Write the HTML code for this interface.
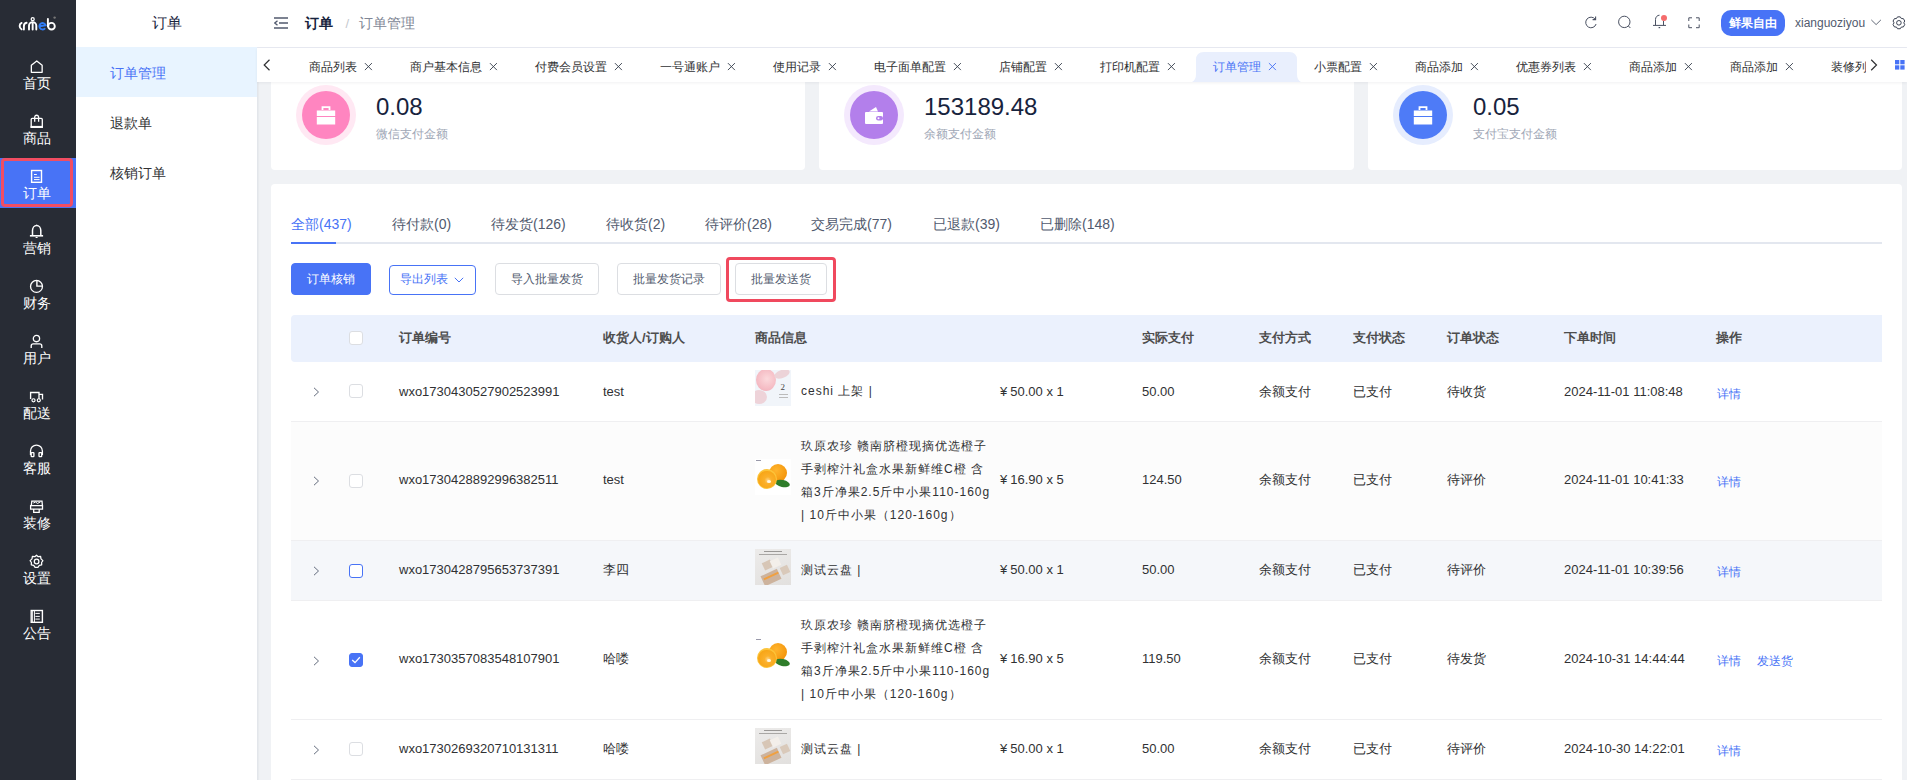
<!DOCTYPE html>
<html><head><meta charset="utf-8">
<style>
*{box-sizing:border-box;margin:0;padding:0}
html,body{width:1907px;height:780px;overflow:hidden;background:#f0f2f5;font-family:"Liberation Sans",sans-serif;color:#303133}
.abs{position:absolute}
#side{position:absolute;left:0;top:0;width:76px;height:780px;background:#282c35}
.si{position:absolute;left:0;width:76px;height:50px;color:#fff;font-size:13.5px;text-align:center}
.si svg{position:absolute;left:30px;top:10px}
.si span{position:absolute;left:0;width:73px;top:27px;line-height:16px}
#sub{position:absolute;left:76px;top:0;width:182px;height:780px;background:#fff;border-right:1px solid #e3e6eb;box-shadow:1px 0 1px rgba(0,21,41,.03)}
#hdr{position:absolute;left:257px;top:0;width:1650px;height:48px;background:#fff;border-bottom:1px solid #e8eaf2}
#tabs{position:absolute;left:257px;top:48px;width:1650px;height:34px;background:#fff;box-shadow:0 1px 3px rgba(0,21,41,.06);z-index:5;overflow:hidden}
.tab{position:absolute;top:4px;height:30px;font-size:12px;color:#303133;line-height:30px;white-space:nowrap}
.tab .x{position:absolute;top:0;font-size:13px}
.card{position:absolute;background:#fff;border-radius:4px}
.circ{position:absolute;left:25px;top:25px;width:60px;height:60px;border-radius:50%}
.circ i{position:absolute;left:6px;top:6px;width:48px;height:48px;border-radius:50%}
.num{position:absolute;left:105px;top:33px;font-size:24px;color:#17233d;line-height:28px}
.lbl{position:absolute;left:105px;top:66px;font-size:12px;color:#a0a7b6;line-height:16px}
.otab{position:absolute;top:214px;font-size:14px;color:#515a6e;line-height:20px;white-space:nowrap}
.btn{position:absolute;height:32px;border:1px solid #dcdee2;border-radius:4px;font-size:12px;color:#515a6e;text-align:center;line-height:30px;background:#fff}
.th{position:absolute;top:330px;font-size:13px;font-weight:bold;color:#4d4d4d;line-height:16px;white-space:nowrap}
.td{position:absolute;font-size:13px;color:#303133;line-height:16px;white-space:nowrap}
.cb{position:absolute;left:349px;width:14px;height:14px;border:1px solid #dcdee2;border-radius:3px;background:#fff}
.chev{position:absolute;left:313px}
.link{position:absolute;font-size:12px;color:#4873f6;line-height:16px}
.pimg{position:absolute;left:755px;width:36px;height:36px}
.pname{position:absolute;left:801px;font-size:12px;letter-spacing:1px;line-height:23px;color:#303133;width:200px}
</style></head><body>
<div id="side">
<svg class="abs" style="left:0;top:-0.5px" width="76" height="40" viewBox="0 0 76 40"><g fill="none" stroke="#fff" stroke-width="1.9" stroke-linecap="round"><path d="M21.6 22.9 A3.3 3.5 0 0 0 21.6 29.3"/><path d="M23.9 29.5 V26.2 A3.3 3.3 0 0 1 26.6 22.8"/><path d="M29 29.5 V25.8 A3.6 3.6 0 0 1 36.3 25.8 V29.5 M32.65 23 V29.5"/><circle cx="32.7" cy="19.2" r="1.5" stroke-width="1.3"/><path d="M47.9 19 V26.3"/><circle cx="51.5" cy="26.2" r="3.3"/></g><path d="M39.9 26.3 L45.6 25.2 A3.2 3.2 0 1 0 44.6 28.7" fill="none" stroke="#2f7cf6" stroke-width="1.9" stroke-linecap="round"/><circle cx="54.6" cy="17.6" r="1.2" fill="#777"/></svg>
<div class="si" style="top:48px"><svg width="26" height="20" viewBox="0 0 26 20" style="left:24px;top:8px"><path d="M7.35 16.35 V9.2 L12.75 4.9 L18.15 9.2 V16.35 Z" fill="none" stroke="#fff" stroke-width="1.3" stroke-linejoin="round"/></svg><span style="top:28px">首页</span></div>
<div class="si" style="top:103px"><svg width="26" height="20" viewBox="0 0 26 20" style="left:24px;top:8px"><path d="M7.2 16.2 V8.4 Q7.2 7.4 8.2 7.4 H17.3 Q18.3 7.4 18.3 8.4 V16.2 Z" fill="none" stroke="#fff" stroke-width="1.3"/><rect x="6.6" y="14.9" width="12.3" height="2.1" fill="#fff"/><path d="M10.7 10.8 V5.8 A2 2 0 0 1 14.6 5.8 V10.8" fill="none" stroke="#fff" stroke-width="1.3"/></svg><span style="top:28px">商品</span></div>
<div class="abs" style="left:0;top:158px;width:76px;height:50px;background:#4873f6"></div>
<div class="abs" style="left:1px;top:158px;width:72px;height:49px;border:3px solid #f24d62;border-radius:4px;z-index:2"></div>
<div class="si" style="top:158px"><svg width="26" height="20" viewBox="0 0 26 20" style="left:24px;top:8px"><rect x="7.6" y="4.5" width="9.9" height="11.8" fill="none" stroke="#fff" stroke-width="1.4"/><path d="M10 8.5 H12.8 M10 11.3 H15.6 M10 13.6 H15.6" fill="none" stroke="#fff" stroke-width="1"/></svg><span style="top:28px">订单</span></div>
<div class="si" style="top:213px"><svg width="26" height="20" viewBox="0 0 26 20" style="left:24px;top:8px"><path d="M8.5 14.6 V9.6 A4.15 5.2 0 0 1 16.8 9.6 V14.6" fill="none" stroke="#fff" stroke-width="1.5"/><path d="M5.9 14.8 H19.1" fill="none" stroke="#fff" stroke-width="1.6"/><path d="M11.6 16.5 H13.6" fill="none" stroke="#fff" stroke-width="1"/><path d="M12.65 3.8 V4.8" fill="none" stroke="#fff" stroke-width="1.2"/></svg><span style="top:28px">营销</span></div>
<div class="si" style="top:268px"><svg width="26" height="20" viewBox="0 0 26 20" style="left:24px;top:8px"><circle cx="12.5" cy="10.4" r="5.95" fill="none" stroke="#fff" stroke-width="1.3"/><path d="M12.9 4.4 V10.1 H18.4" fill="none" stroke="#fff" stroke-width="1.4"/></svg><span style="top:28px">财务</span></div>
<div class="si" style="top:323px"><svg width="26" height="20" viewBox="0 0 26 20" style="left:24px;top:8px"><circle cx="12.45" cy="7.6" r="3.15" fill="none" stroke="#fff" stroke-width="1.3"/><path d="M7.2 16.9 V15 Q7.2 12.9 9.3 12.9 H15.7 Q17.8 12.9 17.8 15 V16.9" fill="none" stroke="#fff" stroke-width="1.35"/></svg><span style="top:28px">用户</span></div>
<div class="si" style="top:378px"><svg width="26" height="20" viewBox="0 0 26 20" style="left:24px;top:8px"><path d="M6.6 13 V6.5 H15 V13 M15 8.4 H18.5 V13.6" fill="none" stroke="#fff" stroke-width="1.35"/><circle cx="9.5" cy="14.3" r="1.55" fill="#282c35" stroke="#fff" stroke-width="1.2"/><circle cx="14.8" cy="14.3" r="1.55" fill="#282c35" stroke="#fff" stroke-width="1.2"/></svg><span style="top:28px">配送</span></div>
<div class="si" style="top:433px"><svg width="26" height="20" viewBox="0 0 26 20" style="left:24px;top:8px"><path d="M6.5 14 V10 A5.95 5.95 0 0 1 18.4 10 V14" fill="none" stroke="#fff" stroke-width="1.3"/><rect x="7.2" y="11.6" width="2.7" height="4" rx="0.6" fill="none" stroke="#fff" stroke-width="1.3"/><rect x="15" y="11.6" width="2.7" height="4" rx="0.6" fill="none" stroke="#fff" stroke-width="1.3"/></svg><span style="top:28px">客服</span></div>
<div class="si" style="top:488px"><svg width="26" height="20" viewBox="0 0 26 20" style="left:24px;top:8px"><path d="M7.3 9.5 L7.8 5.2 H18 L18.4 9.5" fill="none" stroke="#fff" stroke-width="1.3"/><path d="M6.6 9.6 H18.5 V13.2 H6.6 Z M9.7 13.2 V16.4 H15.2 V13.2" fill="none" stroke="#fff" stroke-width="1.3"/><path d="M9.3 7 L11.5 6 L13.5 7.4 L16.4 6" fill="none" stroke="#fff" stroke-width="1"/></svg><span style="top:28px">装修</span></div>
<div class="si" style="top:543px"><svg width="26" height="20" viewBox="0 0 26 20" style="left:24px;top:8px"><path d="M12.5 4.2 L14.2 5.7 L16.6 5.4 L17 7.9 L18.9 9.6 L17.6 11.5 L17.7 13.9 L15.3 14.3 L13.9 16.4 L12.5 16.4 L11.1 16.4 L9.7 14.3 L7.3 13.9 L7.4 11.5 L6.1 9.6 L8 7.9 L8.4 5.4 L10.8 5.7 Z" fill="none" stroke="#fff" stroke-width="1.25" stroke-linejoin="round"/><circle cx="12.6" cy="10.5" r="2.3" fill="none" stroke="#fff" stroke-width="1.3"/></svg><span style="top:28px">设置</span></div>
<div class="si" style="top:598px"><svg width="26" height="20" viewBox="0 0 26 20" style="left:24px;top:8px"><rect x="7.2" y="4.5" width="11.2" height="11.8" fill="none" stroke="#fff" stroke-width="1.4"/><path d="M8.6 5 V16 M10.5 5 V16" fill="none" stroke="#fff" stroke-width="0.9"/><path d="M11.4 7.4 H15.8 M11.4 10.4 H15.8 M11.4 13.1 H15.8" fill="none" stroke="#fff" stroke-width="1"/></svg><span style="top:28px">公告</span></div>
</div>
<div id="sub">
<div class="abs" style="left:0;top:14px;width:181px;text-align:center;font-size:15px;line-height:18px;color:#17233d">订单</div>
<div class="abs" style="left:0;top:47px;width:181px;height:50px;background:#e8f4ff"></div>
<div class="abs" style="left:34px;top:65px;font-size:14px;line-height:17px;color:#4873f6">订单管理</div>
<div class="abs" style="left:34px;top:115px;font-size:14px;line-height:17px;color:#303133">退款单</div>
<div class="abs" style="left:34px;top:165px;font-size:14px;line-height:17px;color:#303133">核销订单</div>
</div>
<div id="hdr">
<svg class="abs" style="left:17px;top:17px" width="14" height="12" viewBox="0 0 14 12"><path d="M0 1 H14 M5 6 H14 M0 11 H14" stroke="#515a6e" stroke-width="1.6"/><path d="M3.5 3.8 L0.8 6 L3.5 8.2" fill="none" stroke="#515a6e" stroke-width="1.3"/></svg>
<div class="abs" style="left:48px;top:15px;font-size:14px;line-height:17px;font-weight:bold;color:#17233d">订单</div>
<div class="abs" style="left:88.5px;top:15px;font-size:13px;line-height:17px;color:#c5c8ce">/</div>
<div class="abs" style="left:102px;top:15px;font-size:14px;line-height:17px;color:#808695">订单管理</div>
<svg class="abs" style="left:1320px;top:0" width="140" height="40" viewBox="1577 0 140 40"><g fill="none" stroke="#4a5162" stroke-width="1">
<path d="M1595.2 19.2 A5.3 5.3 0 1 0 1596.1 24"/><path d="M1595.6 16.6 V19.6 H1592.6" stroke-width="1.1"/>
<circle cx="1624.3" cy="21.9" r="5.7"/><path d="M1628.4 26 L1630.4 28"/>
<path d="M1655.5 25.3 V19.5 A4 4.3 0 0 1 1659.5 15.2 M1663.5 21 V25.3 M1653 25.4 H1666" /><path d="M1658.6 27.6 H1660.2" stroke-width="1.2"/>
<path d="M1688.8 21 V17.8 H1692 M1696 17.8 H1699.2 V21 M1699.2 24.5 V27.7 H1696 M1692 27.7 H1688.8 V24.5"/>
</g><circle cx="1664" cy="18" r="3" fill="#f56c6c"/></svg>
<div class="abs" style="left:1464px;top:10px;width:64px;height:26px;border-radius:10px;background:#4873f6;color:#fff;font-size:12px;font-weight:bold;line-height:26px;text-align:center">鲜果自由</div>
<div class="abs" style="left:1538px;top:15px;font-size:12px;line-height:16px;color:#515a6e">xianguoziyou</div>
<svg class="abs" style="left:1614px;top:19px" width="11" height="7" viewBox="0 0 11 7"><path d="M0.3 0.9 L5.1 5.6 L9.9 0.9" fill="none" stroke="#5a6170" stroke-width="0.95"/></svg>
<svg class="abs" style="left:1635px;top:16px" width="14" height="14" viewBox="0 0 14 14"><path d="M5.53 0.86 L8.27 0.86 L9.35 2.56 L11.36 2.64 L12.73 5.02 L11.80 6.80 L12.73 8.58 L11.36 10.96 L9.35 11.04 L8.27 12.74 L5.53 12.74 L4.45 11.04 L2.44 10.96 L1.07 8.58 L2.00 6.80 L1.07 5.02 L2.44 2.64 L4.45 2.56 Z" fill="none" stroke="#3a4152" stroke-width="1" stroke-linejoin="round"/><circle cx="6.9" cy="6.8" r="2.3" fill="none" stroke="#3a4152" stroke-width="1"/></svg>
</div>
<div id="tabs">
<div class="abs" style="left:35px;top:0;width:1574px;height:34px;overflow:hidden">
<div class="tab" style="left:17px;color:#303133">商品列表</div>
<svg class="abs" style="left:72px;top:14px" width="10" height="10" viewBox="0 0 10 10"><path d="M0.9 1.1 L7.9 8.1 M7.9 1.1 L0.9 8.1" stroke="#3d4452" stroke-width="0.95"/></svg>
<div class="tab" style="left:118px;color:#303133">商户基本信息</div>
<svg class="abs" style="left:197px;top:14px" width="10" height="10" viewBox="0 0 10 10"><path d="M0.9 1.1 L7.9 8.1 M7.9 1.1 L0.9 8.1" stroke="#3d4452" stroke-width="0.95"/></svg>
<div class="tab" style="left:243px;color:#303133">付费会员设置</div>
<svg class="abs" style="left:322px;top:14px" width="10" height="10" viewBox="0 0 10 10"><path d="M0.9 1.1 L7.9 8.1 M7.9 1.1 L0.9 8.1" stroke="#3d4452" stroke-width="0.95"/></svg>
<div class="tab" style="left:368px;color:#303133">一号通账户</div>
<svg class="abs" style="left:435px;top:14px" width="10" height="10" viewBox="0 0 10 10"><path d="M0.9 1.1 L7.9 8.1 M7.9 1.1 L0.9 8.1" stroke="#3d4452" stroke-width="0.95"/></svg>
<div class="tab" style="left:481px;color:#303133">使用记录</div>
<svg class="abs" style="left:536px;top:14px" width="10" height="10" viewBox="0 0 10 10"><path d="M0.9 1.1 L7.9 8.1 M7.9 1.1 L0.9 8.1" stroke="#3d4452" stroke-width="0.95"/></svg>
<div class="tab" style="left:582px;color:#303133">电子面单配置</div>
<svg class="abs" style="left:661px;top:14px" width="10" height="10" viewBox="0 0 10 10"><path d="M0.9 1.1 L7.9 8.1 M7.9 1.1 L0.9 8.1" stroke="#3d4452" stroke-width="0.95"/></svg>
<div class="tab" style="left:707px;color:#303133">店铺配置</div>
<svg class="abs" style="left:762px;top:14px" width="10" height="10" viewBox="0 0 10 10"><path d="M0.9 1.1 L7.9 8.1 M7.9 1.1 L0.9 8.1" stroke="#3d4452" stroke-width="0.95"/></svg>
<div class="tab" style="left:808px;color:#303133">打印机配置</div>
<svg class="abs" style="left:875px;top:14px" width="10" height="10" viewBox="0 0 10 10"><path d="M0.9 1.1 L7.9 8.1 M7.9 1.1 L0.9 8.1" stroke="#3d4452" stroke-width="0.95"/></svg>
<svg class="abs" style="left:900px;top:4px" width="109" height="30" viewBox="0 0 109 30"><path d="M0 30 Q4 28 4 22 V8 Q4 0 12 0 H97 Q105 0 105 8 V22 Q105 28 109 30 Z" fill="#e9effd"/></svg>
<div class="tab" style="left:921px;color:#4873f6">订单管理</div>
<svg class="abs" style="left:976px;top:14px" width="10" height="10" viewBox="0 0 10 10"><path d="M0.9 1.1 L7.9 8.1 M7.9 1.1 L0.9 8.1" stroke="#4873f6" stroke-width="0.95"/></svg>
<div class="tab" style="left:1022px;color:#303133">小票配置</div>
<svg class="abs" style="left:1077px;top:14px" width="10" height="10" viewBox="0 0 10 10"><path d="M0.9 1.1 L7.9 8.1 M7.9 1.1 L0.9 8.1" stroke="#3d4452" stroke-width="0.95"/></svg>
<div class="tab" style="left:1123px;color:#303133">商品添加</div>
<svg class="abs" style="left:1178px;top:14px" width="10" height="10" viewBox="0 0 10 10"><path d="M0.9 1.1 L7.9 8.1 M7.9 1.1 L0.9 8.1" stroke="#3d4452" stroke-width="0.95"/></svg>
<div class="tab" style="left:1224px;color:#303133">优惠券列表</div>
<svg class="abs" style="left:1291px;top:14px" width="10" height="10" viewBox="0 0 10 10"><path d="M0.9 1.1 L7.9 8.1 M7.9 1.1 L0.9 8.1" stroke="#3d4452" stroke-width="0.95"/></svg>
<div class="tab" style="left:1337px;color:#303133">商品添加</div>
<svg class="abs" style="left:1392px;top:14px" width="10" height="10" viewBox="0 0 10 10"><path d="M0.9 1.1 L7.9 8.1 M7.9 1.1 L0.9 8.1" stroke="#3d4452" stroke-width="0.95"/></svg>
<div class="tab" style="left:1438px;color:#303133">商品添加</div>
<svg class="abs" style="left:1493px;top:14px" width="10" height="10" viewBox="0 0 10 10"><path d="M0.9 1.1 L7.9 8.1 M7.9 1.1 L0.9 8.1" stroke="#3d4452" stroke-width="0.95"/></svg>
<div class="tab" style="left:1539px;color:#303133">装修列表</div>
<svg class="abs" style="left:1594px;top:14px" width="10" height="10" viewBox="0 0 10 10"><path d="M0.9 1.1 L7.9 8.1 M7.9 1.1 L0.9 8.1" stroke="#3d4452" stroke-width="0.95"/></svg>
</div>
<svg class="abs" style="left:6px;top:11px" width="8" height="12" viewBox="0 0 8 12"><path d="M6.5 0.8 L1.2 6 L6.5 11.2" fill="none" stroke="#303133" stroke-width="1.2"/></svg>
<svg class="abs" style="left:1613px;top:11px" width="8" height="12" viewBox="0 0 8 12"><path d="M1.2 0.8 L6.5 6 L1.2 11.2" fill="none" stroke="#303133" stroke-width="1.2"/></svg>
<svg class="abs" style="left:1638px;top:12px" width="10" height="10" viewBox="0 0 10 10"><rect x="0" y="0" width="4.3" height="4.3" fill="#4873f6"/><rect x="5.3" y="0" width="4.3" height="4.3" fill="#4873f6"/><rect x="0" y="5.3" width="4.3" height="4.3" fill="#4873f6"/><rect x="5.3" y="5.3" width="4.3" height="4.3" fill="#4873f6"/></svg>
</div>
<div id="content">
<div class="card" style="left:271px;top:60px;width:534px;height:110px"><div class="circ" style="background:#ffe8f3"><i style="background:#ff85c0"><svg class="abs" style="left:14px;top:15px" width="20" height="19" viewBox="0 0 20 19"><path d="M6.5 4 V1.2 H13.5 V4" fill="none" stroke="#fff" stroke-width="1.8"/><rect x="0.8" y="4.5" width="18.4" height="5.5" fill="#fff"/><rect x="0.8" y="11" width="18.4" height="7.5" fill="#fff"/></svg></i></div><div class="num">0.08</div><div class="lbl">微信支付金额</div></div>
<div class="card" style="left:819px;top:60px;width:535px;height:110px"><div class="circ" style="background:#f4e9fd"><i style="background:#b37feb"><svg class="abs" style="left:14px;top:15px" width="20" height="19" viewBox="0 0 20 19"><path d="M5 5.5 L12 1 L14 5.5 Z" fill="#fff"/><rect x="1" y="6" width="18" height="12" rx="1" fill="#fff"/><rect x="12" y="10" width="7" height="4.5" rx="2.2" fill="#b37feb"/><circle cx="14.5" cy="12.2" r="1" fill="#fff"/></svg></i></div><div class="num">153189.48</div><div class="lbl">余额支付金额</div></div>
<div class="card" style="left:1368px;top:60px;width:534px;height:110px"><div class="circ" style="background:#e6edfe"><i style="background:#4e7bf7"><svg class="abs" style="left:14px;top:15px" width="20" height="19" viewBox="0 0 20 19"><path d="M6.5 4 V1.2 H13.5 V4" fill="none" stroke="#fff" stroke-width="1.8"/><rect x="0.8" y="4.5" width="18.4" height="5.5" fill="#fff"/><rect x="0.8" y="11" width="18.4" height="7.5" fill="#fff"/></svg></i></div><div class="num">0.05</div><div class="lbl">支付宝支付金额</div></div>
<div class="card" style="left:271px;top:184px;width:1631px;height:620px"></div>
<div class="otab" style="left:291px;color:#4873f6">全部(437)</div>
<div class="otab" style="left:392px;color:#515a6e">待付款(0)</div>
<div class="otab" style="left:491px;color:#515a6e">待发货(126)</div>
<div class="otab" style="left:606px;color:#515a6e">待收货(2)</div>
<div class="otab" style="left:705px;color:#515a6e">待评价(28)</div>
<div class="otab" style="left:811px;color:#515a6e">交易完成(77)</div>
<div class="otab" style="left:933px;color:#515a6e">已退款(39)</div>
<div class="otab" style="left:1040px;color:#515a6e">已删除(148)</div>
<div class="abs" style="left:291px;top:242px;width:1591px;height:2px;background:#e3e7ef"></div>
<div class="abs" style="left:291px;top:242px;width:45px;height:2px;background:#4873f6"></div>
<div class="btn" style="left:291px;top:263px;width:80px;background:#4873f6;border-color:#4873f6;color:#fff">订单核销</div>
<div class="btn" style="left:389px;top:265px;width:87px;height:30px;line-height:28px;border-color:#4873f6;color:#4873f6;text-align:left;padding-left:10px;line-height:27px">导出列表<svg class="abs" style="left:64px;top:11px" width="10" height="7" viewBox="0 0 10 7"><path d="M0.8 0.8 L5 5 L9.2 0.8" fill="none" stroke="#4873f6" stroke-width="1"/></svg></div>
<div class="btn" style="left:495px;top:263px;width:104px">导入批量发货</div>
<div class="btn" style="left:617px;top:263px;width:104px">批量发货记录</div>
<div class="btn" style="left:735px;top:263px;width:92px">批量发送货</div>
<div class="abs" style="left:726px;top:257px;width:110px;height:45px;border:3px solid #f0495e;border-radius:4px"></div>
<div class="abs" style="left:291px;top:315px;width:1591px;height:47px;background:#ebf1fd;border-radius:4px 0 0 4px"></div>
<div class="cb" style="top:331px"></div>
<div class="th" style="left:399px">订单编号</div>
<div class="th" style="left:603px">收货人/订购人</div>
<div class="th" style="left:755px">商品信息</div>
<div class="th" style="left:1142px">实际支付</div>
<div class="th" style="left:1259px">支付方式</div>
<div class="th" style="left:1353px">支付状态</div>
<div class="th" style="left:1447px">订单状态</div>
<div class="th" style="left:1564px">下单时间</div>
<div class="th" style="left:1716px">操作</div>
<div class="abs" style="left:291px;top:362px;width:1591px;height:60px;background:#fff;border-bottom:1px solid #efeff1"></div>
<svg class="chev" style="top:387px" width="7" height="10" viewBox="0 0 7 10"><path d="M1 0.8 L5.5 5 L1 9.2" fill="none" stroke="#5c6476" stroke-width="0.95"/></svg>
<div class="cb" style="top:384px"></div>
<div class="td" style="left:399px;top:384px">wxo1730430527902523991</div>
<div class="td" style="left:603px;top:384px">test</div>
<div class="pimg" style="top:370px;background:#f1f5fa;overflow:hidden"><div class="abs" style="left:1px;top:-1px;width:20px;height:22px;border-radius:50%;background:radial-gradient(circle at 55% 45%,#fbd9dc,#f3b3bd 80%)"></div><div class="abs" style="left:19px;top:0px;width:16px;height:8px;border-radius:50%;background:#ecd3d8;transform:rotate(-20deg)"></div><div class="abs" style="left:-4px;top:20px;width:16px;height:14px;border-radius:50%;background:#eed3d9"></div><div class="abs" style="left:25.5px;top:13px;width:5px;height:8px;font-size:9px;line-height:8px;color:#444;font-family:'Liberation Serif',serif">2</div><div class="abs" style="left:23.5px;top:23.5px;width:9px;height:1px;background:#bbb"></div><div class="abs" style="left:23.5px;top:27px;width:9px;height:1px;background:#bbb"></div></div>
<div class="pname" style="top:380px;white-space:nowrap">ceshi 上架 |</div>
<div class="td" style="left:1000px;top:384px"><span style="margin-right:3px">¥</span>50.00 x 1</div>
<div class="td" style="left:1142px;top:384px">50.00</div>
<div class="td" style="left:1259px;top:384px">余额支付</div>
<div class="td" style="left:1353px;top:384px">已支付</div>
<div class="td" style="left:1447px;top:384px">待收货</div>
<div class="td" style="left:1564px;top:384px">2024-11-01 11:08:48</div>
<div class="link" style="left:1717px;top:386px">详情</div>
<div class="abs" style="left:291px;top:422px;width:1591px;height:119px;background:#fcfcfc;border-bottom:1px solid #efeff1"></div>
<svg class="chev" style="top:476px" width="7" height="10" viewBox="0 0 7 10"><path d="M1 0.8 L5.5 5 L1 9.2" fill="none" stroke="#5c6476" stroke-width="0.95"/></svg>
<div class="cb" style="top:474px"></div>
<div class="td" style="left:399px;top:472px">wxo1730428892996382511</div>
<div class="td" style="left:603px;top:472px">test</div>
<div class="pimg" style="top:459px;background:#fff;overflow:hidden"><div class="abs" style="left:13.5px;top:4.5px;width:18px;height:18px;border-radius:50%;background:radial-gradient(circle at 40% 35%,#ffb52e,#f08a00)"></div><div class="abs" style="left:20px;top:21px;width:15px;height:7px;border-radius:50%;background:#2f7d2a;transform:rotate(12deg)"></div><div class="abs" style="left:1.8px;top:10.3px;width:20.2px;height:20px;border-radius:50%;background:#fcc43a"></div><div class="abs" style="left:3px;top:11.5px;width:17.8px;height:17.6px;border-radius:50%;background:radial-gradient(circle at 55% 55%,#ffd68a 0,#fbb02a 25%,#f59e0b 100%)"></div><div class="abs" style="left:11.5px;top:20.5px;width:4px;height:3px;border-radius:50%;background:#fff8e6"></div><div class="abs" style="left:0.5px;top:1px;width:5px;height:1.2px;background:#99a"></div></div>
<div class="pname" style="top:435px;width:192px;word-break:break-all">玖原农珍 赣南脐橙现摘优选橙子手剥榨汁礼盒水果新鲜维C橙 含箱3斤净果2.5斤中小果110-160g | 10斤中小果（120-160g）</div>
<div class="td" style="left:1000px;top:472px"><span style="margin-right:3px">¥</span>16.90 x 5</div>
<div class="td" style="left:1142px;top:472px">124.50</div>
<div class="td" style="left:1259px;top:472px">余额支付</div>
<div class="td" style="left:1353px;top:472px">已支付</div>
<div class="td" style="left:1447px;top:472px">待评价</div>
<div class="td" style="left:1564px;top:472px">2024-11-01 10:41:33</div>
<div class="link" style="left:1717px;top:474px">详情</div>
<div class="abs" style="left:291px;top:541px;width:1591px;height:60px;background:#f5f7fa;border-bottom:1px solid #efeff1"></div>
<svg class="chev" style="top:566px" width="7" height="10" viewBox="0 0 7 10"><path d="M1 0.8 L5.5 5 L1 9.2" fill="none" stroke="#5c6476" stroke-width="0.95"/></svg>
<div class="cb" style="top:564px;border-color:#4873f6"></div>
<div class="td" style="left:399px;top:562px">wxo1730428795653737391</div>
<div class="td" style="left:603px;top:562px">李四</div>
<div class="pimg" style="top:549px;background:linear-gradient(160deg,#ecebea,#e2e0de);overflow:hidden"><div class="abs" style="left:9px;top:2px;width:18px;height:1px;background:#9a9896"></div><div class="abs" style="left:4px;top:5px;width:28px;height:1px;background:#a9a7a5"></div><div class="abs" style="left:8px;top:12px;width:9px;height:8px;background:#d7c6b6;transform:rotate(-25deg)"></div><div class="abs" style="left:16px;top:10px;width:9px;height:8px;background:#f3efea;transform:rotate(-25deg)"></div><div class="abs" style="left:26px;top:17px;width:8px;height:8px;background:#d9c9ba;transform:rotate(-25deg)"></div><div class="abs" style="left:7px;top:23px;width:18px;height:11px;background:#cdb39d;transform:rotate(-25deg)"></div><div class="abs" style="left:8px;top:26px;width:16px;height:1.5px;background:#f0a040;transform:rotate(-25deg)"></div></div>
<div class="pname" style="top:559px;white-space:nowrap">测试云盘 |</div>
<div class="td" style="left:1000px;top:562px"><span style="margin-right:3px">¥</span>50.00 x 1</div>
<div class="td" style="left:1142px;top:562px">50.00</div>
<div class="td" style="left:1259px;top:562px">余额支付</div>
<div class="td" style="left:1353px;top:562px">已支付</div>
<div class="td" style="left:1447px;top:562px">待评价</div>
<div class="td" style="left:1564px;top:562px">2024-11-01 10:39:56</div>
<div class="link" style="left:1717px;top:564px">详情</div>
<div class="abs" style="left:291px;top:601px;width:1591px;height:119px;background:#fff;border-bottom:1px solid #efeff1"></div>
<svg class="chev" style="top:656px" width="7" height="10" viewBox="0 0 7 10"><path d="M1 0.8 L5.5 5 L1 9.2" fill="none" stroke="#5c6476" stroke-width="0.95"/></svg>
<div class="cb" style="top:653px;background:#4873f6;border-color:#4873f6"><svg class="abs" style="left:1px;top:2px" width="10" height="8" viewBox="0 0 10 8"><path d="M1.2 4 L4 6.6 L8.8 1.2" fill="none" stroke="#fff" stroke-width="1.3"/></svg></div>
<div class="td" style="left:399px;top:651px">wxo1730357083548107901</div>
<div class="td" style="left:603px;top:651px">哈喽</div>
<div class="pimg" style="top:638px;background:#fff;overflow:hidden"><div class="abs" style="left:13.5px;top:4.5px;width:18px;height:18px;border-radius:50%;background:radial-gradient(circle at 40% 35%,#ffb52e,#f08a00)"></div><div class="abs" style="left:20px;top:21px;width:15px;height:7px;border-radius:50%;background:#2f7d2a;transform:rotate(12deg)"></div><div class="abs" style="left:1.8px;top:10.3px;width:20.2px;height:20px;border-radius:50%;background:#fcc43a"></div><div class="abs" style="left:3px;top:11.5px;width:17.8px;height:17.6px;border-radius:50%;background:radial-gradient(circle at 55% 55%,#ffd68a 0,#fbb02a 25%,#f59e0b 100%)"></div><div class="abs" style="left:11.5px;top:20.5px;width:4px;height:3px;border-radius:50%;background:#fff8e6"></div><div class="abs" style="left:0.5px;top:1px;width:5px;height:1.2px;background:#99a"></div></div>
<div class="pname" style="top:614px;width:192px;word-break:break-all">玖原农珍 赣南脐橙现摘优选橙子手剥榨汁礼盒水果新鲜维C橙 含箱3斤净果2.5斤中小果110-160g | 10斤中小果（120-160g）</div>
<div class="td" style="left:1000px;top:651px"><span style="margin-right:3px">¥</span>16.90 x 5</div>
<div class="td" style="left:1142px;top:651px">119.50</div>
<div class="td" style="left:1259px;top:651px">余额支付</div>
<div class="td" style="left:1353px;top:651px">已支付</div>
<div class="td" style="left:1447px;top:651px">待发货</div>
<div class="td" style="left:1564px;top:651px">2024-10-31 14:44:44</div>
<div class="link" style="left:1717px;top:653px">详情</div>
<div class="link" style="left:1757px;top:653px">发送货</div>
<div class="abs" style="left:291px;top:720px;width:1591px;height:60px;background:#fff;border-bottom:1px solid #efeff1"></div>
<svg class="chev" style="top:745px" width="7" height="10" viewBox="0 0 7 10"><path d="M1 0.8 L5.5 5 L1 9.2" fill="none" stroke="#5c6476" stroke-width="0.95"/></svg>
<div class="cb" style="top:742px"></div>
<div class="td" style="left:399px;top:741px">wxo1730269320710131311</div>
<div class="td" style="left:603px;top:741px">哈喽</div>
<div class="pimg" style="top:728px;background:linear-gradient(160deg,#ecebea,#e2e0de);overflow:hidden"><div class="abs" style="left:9px;top:2px;width:18px;height:1px;background:#9a9896"></div><div class="abs" style="left:4px;top:5px;width:28px;height:1px;background:#a9a7a5"></div><div class="abs" style="left:8px;top:12px;width:9px;height:8px;background:#d7c6b6;transform:rotate(-25deg)"></div><div class="abs" style="left:16px;top:10px;width:9px;height:8px;background:#f3efea;transform:rotate(-25deg)"></div><div class="abs" style="left:26px;top:17px;width:8px;height:8px;background:#d9c9ba;transform:rotate(-25deg)"></div><div class="abs" style="left:7px;top:23px;width:18px;height:11px;background:#cdb39d;transform:rotate(-25deg)"></div><div class="abs" style="left:8px;top:26px;width:16px;height:1.5px;background:#f0a040;transform:rotate(-25deg)"></div></div>
<div class="pname" style="top:738px;white-space:nowrap">测试云盘 |</div>
<div class="td" style="left:1000px;top:741px"><span style="margin-right:3px">¥</span>50.00 x 1</div>
<div class="td" style="left:1142px;top:741px">50.00</div>
<div class="td" style="left:1259px;top:741px">余额支付</div>
<div class="td" style="left:1353px;top:741px">已支付</div>
<div class="td" style="left:1447px;top:741px">待评价</div>
<div class="td" style="left:1564px;top:741px">2024-10-30 14:22:01</div>
<div class="link" style="left:1717px;top:743px">详情</div>
</div>
</body></html>
